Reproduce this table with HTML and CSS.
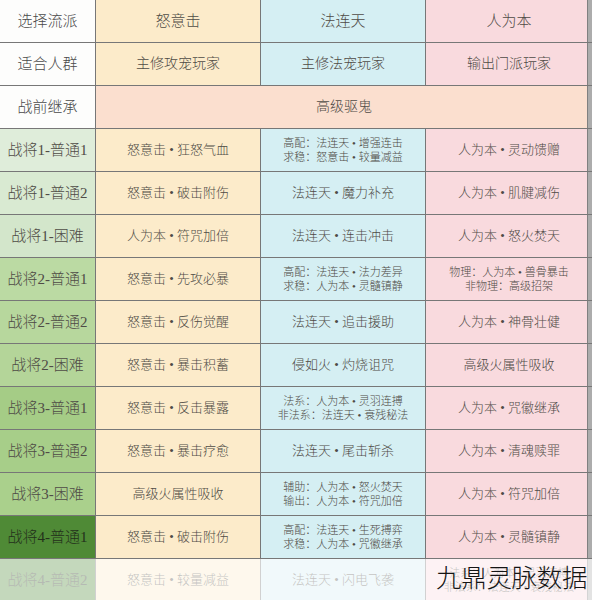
FILE: index.html
```html
<!DOCTYPE html>
<html lang="zh-CN">
<head>
<meta charset="utf-8">
<title>流派选择</title>
<link rel="stylesheet" href="styles.css">
</head>
<body>
<div class="page">
  <div class="table">
    <div class="c c1 head big">选择流派</div>
    <div class="c c2 big">怒意击</div>
    <div class="c c3 big">法连天</div>
    <div class="c c4 big">人为本</div>

    <div class="c c1 head big">适合人群</div>
    <div class="c c2 mid">主修攻宠玩家</div>
    <div class="c c3 mid">主修法宠玩家</div>
    <div class="c c4 mid">输出门派玩家</div>

    <div class="c c1 head big">战前继承</div>
    <div class="c merged mid">高级驱鬼</div>

    <div class="c c1 g1 big">战将1-普通1</div>
    <div class="c c2">怒意击 • 狂怒气血</div>
    <div class="c c3 two"><span>高配：法连天 • 增强连击</span><span>求稳：怒意击 • 较量减益</span></div>
    <div class="c c4">人为本 • 灵动馈赠</div>

    <div class="c c1 g2 big">战将1-普通2</div>
    <div class="c c2">怒意击 • 破击附伤</div>
    <div class="c c3">法连天 • 魔力补充</div>
    <div class="c c4">人为本 • 肌腱减伤</div>

    <div class="c c1 g3 big">战将1-困难</div>
    <div class="c c2">人为本 • 符咒加倍</div>
    <div class="c c3">法连天 • 连击冲击</div>
    <div class="c c4">人为本 • 怒火焚天</div>

    <div class="c c1 g4 big">战将2-普通1</div>
    <div class="c c2">怒意击 • 先攻必暴</div>
    <div class="c c3 two"><span>高配：法连天 • 法力差异</span><span>求稳：人为本 • 灵髓镇静</span></div>
    <div class="c c4 two"><span>物理：人为本 • 兽骨暴击</span><span>非物理：高级招架</span></div>

    <div class="c c1 g5 big">战将2-普通2</div>
    <div class="c c2">怒意击 • 反伤觉醒</div>
    <div class="c c3">法连天 • 追击援助</div>
    <div class="c c4">人为本 • 神骨壮健</div>

    <div class="c c1 g6 big">战将2-困难</div>
    <div class="c c2">怒意击 • 暴击积蓄</div>
    <div class="c c3">侵如火 • 灼烧诅咒</div>
    <div class="c c4">高级火属性吸收</div>

    <div class="c c1 g7 big">战将3-普通1</div>
    <div class="c c2">怒意击 • 反击暴露</div>
    <div class="c c3 two"><span>法系：人为本 • 灵羽连搏</span><span>非法系：法连天 • 衰残秘法</span></div>
    <div class="c c4">人为本 • 咒徽继承</div>

    <div class="c c1 g8 big">战将3-普通2</div>
    <div class="c c2">怒意击 • 暴击疗愈</div>
    <div class="c c3">法连天 • 尾击斩杀</div>
    <div class="c c4">人为本 • 清魂赎罪</div>

    <div class="c c1 g9 big">战将3-困难</div>
    <div class="c c2">高级火属性吸收</div>
    <div class="c c3 two"><span>辅助：人为本 • 怒火焚天</span><span>输出：人为本 • 符咒加倍</span></div>
    <div class="c c4">人为本 • 符咒加倍</div>

    <div class="c c1 g10 big">战将4-普通1</div>
    <div class="c c2">怒意击 • 破击附伤</div>
    <div class="c c3 two"><span>高配：法连天 • 生死搏弈</span><span>求稳：人为本 • 咒徽继承</span></div>
    <div class="c c4">人为本 • 灵髓镇静</div>

    <div class="c c1 g10 big faded">战将4-普通2</div>
    <div class="c c2 faded">怒意击 • 较量减益</div>
    <div class="c c3 faded">法连天 • 闪电飞袭</div>
    <div class="c c4 two faded"><span>法系：人为本 • 灵羽连搏</span><span>非法系：法连天 • 衰残秘法</span></div>
  </div>
  <div class="watermark">九鼎灵脉数据</div>
</div>
</body>
</html>
```

FILE: styles.css
```css
html, body {
  margin: 0;
  padding: 0;
  background: #ffffff;
}

.page {
  position: relative;
  width: 592px;
  height: 600px;
  overflow: hidden;
  font-family: "Liberation Serif", "Noto Sans CJK SC", serif;
}

.table {
  display: grid;
  grid-template-columns: 96px 165px 165px 166px;
  grid-auto-rows: 43px;
  width: 592px;
}

.c {
  box-sizing: border-box;
  display: flex;
  align-items: center;
  justify-content: center;
  text-align: center;
  border-right: 1px solid #777777;
  border-bottom: 1px solid #777777;
  color: #4f4b46;
  font-size: 13px;
  line-height: 1.2;
  white-space: nowrap;
  font-weight: 300;
}

.big { font-size: 15px; }
.mid { font-size: 14px; }

.two {
  flex-direction: column;
  font-size: 11px;
  line-height: 14px;
}

.c1 { background: #fdfdfc; }
.head { color: #4a4a4a; }
.c2 { background: #fcebca; }
.c3 { background: #d5eff3; }
.c4 {
  background: #f9dade;
  border-right: none;
  box-shadow: inset -4px 0 0 rgba(255, 255, 255, 0.35), inset -5px 0 0 #808080;
}
.merged {
  grid-column: span 3;
  background: #fbdfcf;
  border-right: none;
  box-shadow: inset -4px 0 0 rgba(255, 255, 255, 0.35), inset -5px 0 0 #808080;
}

.g1 { background: #dfedda; }
.g2 { background: #d9ead2; }
.g3 { background: #d3e6cb; }
.g4 { background: #bbdaa3; }
.g5 { background: #b7d79d; }
.g6 { background: #b4d599; }
.g7 { background: #a5cc86; }
.g8 { background: #a7ce89; }
.g9 { background: #aad08c; }
.g10 { background: #4f8a36; color: #23301b; }

.faded { opacity: 0.33; }

.watermark {
  position: absolute;
  left: 436px;
  top: 563px;
  font-family: "Noto Sans CJK SC", sans-serif;
  font-size: 25.5px;
  line-height: 1;
  color: #151515;
  font-weight: 300;
  letter-spacing: -0.3px;
}
```
